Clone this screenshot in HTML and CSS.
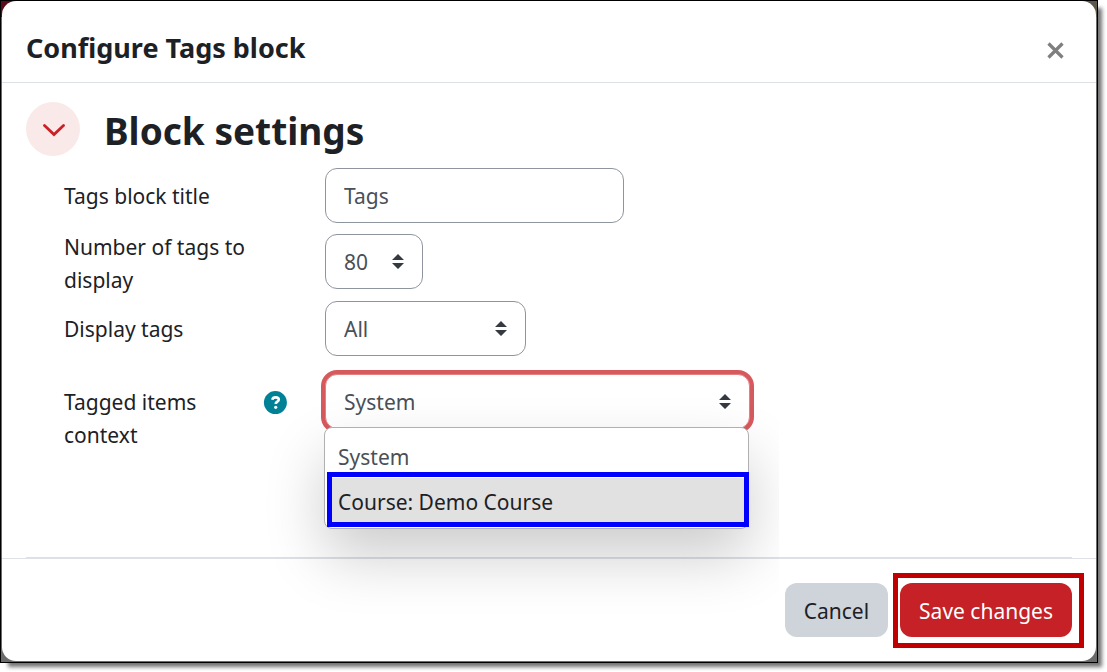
FILE: index.html
```html
<!DOCTYPE html>
<html lang="en">
<head>
  <meta charset="UTF-8" />
  <meta name="viewport" content="width=device-width, initial-scale=1.0" />
  <title>Configure Tags block</title>
  <link rel="stylesheet" href="styles.css">
</head>
<body>
  <div class="frame">
    <div class="modal" role="dialog" aria-labelledby="modalTitle">
      <header class="modal-header">
        <h1 id="modalTitle">Configure Tags block</h1>
        <button type="button" class="close" aria-label="Close">
          <svg width="17" height="17" viewBox="0 0 17 17"><path d="M1.5 1.5l14 14M15.5 1.5l-14 14" fill="none" stroke="#7f7f7f" stroke-width="3.2"/></svg>
        </button>
      </header>

      <form class="modal-body" id="blockForm" autocomplete="off">
        <div class="section-head">
          <button type="button" class="toggle" aria-label="Collapse Block settings" aria-expanded="true">
            <svg width="24" height="24" viewBox="0 0 24 24"><path d="M3.5 8.5l9.5 9 9.5-9" fill="none" stroke="#ca2026" stroke-width="2.8" stroke-linecap="round"/></svg>
          </button>
          <h2>Block settings</h2>
        </div>

        <div class="settings">
          <div class="row">
            <div class="label"><label for="title">Tags block title</label></div>
            <input type="text" id="title" class="control wide" value="Tags">
          </div>
          <div class="row two-line">
            <div class="label"><label for="number">Number of tags to display</label></div>
            <select id="number" class="control short"><option>80</option></select>
          </div>
          <div class="row">
            <div class="label"><label for="display">Display tags</label></div>
            <select id="display" class="control medium"><option>All</option></select>
          </div>
          <div class="row context">
            <div class="label">
              <label for="context">Tagged items context</label>
              <button type="button" class="help" aria-label="Help with Tagged items context">
                <svg width="24" height="24" viewBox="0 0 24 24"><circle cx="12.4" cy="11.6" r="11.5" fill="#008196"/><path d="M9.3 8.7c.3-1.5 1.5-2.3 3.3-2.3 2 0 3.2 1 3.2 2.3 0 2-3.1 2-3.1 4.3" fill="none" stroke="#fff" stroke-width="2.6"/><circle cx="12.7" cy="16.3" r="1.6" fill="#fff"/></svg>
              </button>
            </div>
            <div class="dropdown">
              <select id="context" class="control open">
                <option>System</option>
                <option>Course: Demo Course</option>
              </select>
              <ul class="menu" role="listbox" aria-label="Tagged items context">
                <li role="option" aria-selected="false">System</li>
                <li role="option" aria-selected="true" class="active">Course: Demo Course</li>
              </ul>
            </div>
          </div>
        </div>
        <hr>
      </form>

      <footer class="modal-footer">
        <button type="button" class="btn cancel">Cancel</button>
        <div class="marked">
          <button type="submit" form="blockForm" class="btn save">Save changes</button>
        </div>
      </footer>
    </div>
  </div>
</body>
</html>
```
FILE: styles.css
```css
* {
  box-sizing: border-box;
}
body {
  margin: 0;
  padding: 0 9px 9px 0;
  min-height: 100vh;
  display: flex;
  background: #fff;
  color: #1d2125;
  font-family: "Noto Sans", "Open Sans", sans-serif;
  font-size: 21px;
  line-height: 33px;
}
button, input, select {
  font: inherit;
  color: inherit;
}
h1, h2, ul {
  margin: 0;
  padding: 0;
}

/* screen edge around the dialog */
.frame {
  flex: 1;
  display: flex;
  border: 1px solid #000;
  padding: 0 1px 1px;
  background:
    linear-gradient(#5a0c14, #5a0c14) left top / 16px 16px no-repeat,
    linear-gradient(#5c584c, #5c584c) right top / 16px 16px no-repeat,
    #6b6b6b;
  box-shadow: 6px 6px 4px -2px rgba(0, 0, 0, 0.55);
}
.modal {
  flex: 1;
  display: flex;
  flex-direction: column;
  background: #fff;
  border-radius: 14px;
}
.modal-header {
  display: flex;
  align-items: center;
  justify-content: space-between;
  padding: 30px 24px 18px;
  border-bottom: 1px solid #dee2e6;
}
.modal-header h1 {
  font-size: 27px;
  line-height: 33px;
  font-weight: 700;
}
.close, .toggle, .help {
  display: flex;
  align-items: center;
  justify-content: center;
  flex: none;
  border: none;
  padding: 0;
  background: none;
  cursor: pointer;
}
.close {
  width: 33px;
  height: 33px;
  padding-top: 6px;
}

.modal-body {
  flex: 1;
  display: flex;
  flex-direction: column;
  padding: 19px 24px 0;
}
.section-head {
  display: flex;
  align-items: center;
  gap: 24px;
  margin-bottom: 12px;
}
.toggle {
  width: 54px;
  height: 54px;
  border-radius: 50%;
  background: #fae9e9;
}
.section-head h2 {
  padding-top: 4px;
  font-size: 37px;
  line-height: 50px;
  font-weight: 700;
}
.settings {
  padding-left: 38px;
}
.row {
  display: grid;
  grid-template-columns: 223px 1fr;
  column-gap: 38px;
  align-items: start;
  justify-items: start;
  margin-bottom: 8px;
}
.label {
  width: 100%;
  display: flex;
  justify-content: space-between;
  padding-top: 12px;
}
.two-line {
  margin-bottom: 4px;
}
.two-line .label {
  padding-top: 0;
}
.two-line .control {
  margin-top: 3px;
}
.context {
  margin-top: 18px;
}
.help {
  width: 24px;
  height: 33px;
}

.control {
  height: 55px;
  padding: 0 18px;
  border: 1px solid #8f959e;
  border-radius: 12px;
  background-color: #fff;
  color: #495057;
}
select.control {
  appearance: none;
  padding-top: 2px;
  padding-right: 36px;
  background-image: url("data:image/svg+xml,%3Csvg xmlns='http://www.w3.org/2000/svg' viewBox='0 0 4 5'%3E%3Cpath fill='%23343a40' d='M2 0L0 2h4zm0 5L0 3h4z'/%3E%3C/svg%3E");
  background-repeat: no-repeat;
  background-position: right 18px center;
  background-size: 12px 15px;
}
.wide {
  width: 299px;
}
.short {
  width: 98px;
}
.medium {
  width: 201px;
}
.dropdown {
  position: relative;
  width: 425px;
}
.control.open {
  width: 100%;
  border-color: #e57f82;
  box-shadow: 0 0 0 4px #d6595d;
}
.menu {
  position: absolute;
  top: 53px;
  left: -1px;
  width: 425px;
  padding: 5px 3px;
  list-style: none;
  background: #fff;
  border: 1px solid #b0b0b0;
  border-radius: 8px;
  box-shadow: 0 28px 60px rgba(0, 0, 0, 0.2);
  clip-path: inset(-60px -30px -120px -80px);
}
.menu li {
  height: 45px;
  padding: 4px 10px 0;
  line-height: 41px;
  color: #495057;
}
.menu .active {
  position: relative;
  background: #e1e1e1;
  border-radius: 3px;
  color: #1d2125;
}
.menu .active::after {
  content: "";
  position: absolute;
  inset: -6px -4px -4px -1px;
  border: 5px solid #0000ff;
}
hr {
  width: 100%;
  height: 2px;
  margin: auto 0 -1px;
  border: none;
  background: #dae0e5;
}

.modal-footer {
  display: flex;
  justify-content: flex-end;
  gap: 12px;
  padding: 24px;
  border-top: 1px solid #dee2e6;
}
.btn {
  height: 54px;
  padding: 2px 19px 0;
  border: none;
  border-radius: 12px;
  cursor: pointer;
}
.cancel {
  background: #ced4da;
}
.save {
  background: #c52127;
  color: #fff;
}
.marked {
  position: relative;
}
.marked::after {
  content: "";
  position: absolute;
  inset: -10px -12px -11px -7px;
  border: 5px solid #c00000;
  pointer-events: none;
}
```
